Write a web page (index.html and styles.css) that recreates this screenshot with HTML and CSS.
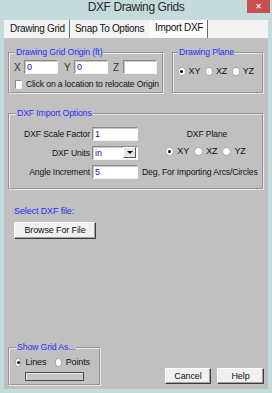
FILE: index.html
```html
<!DOCTYPE html>
<html lang="en">
<head>
  <meta charset="UTF-8" />
  <title>DXF Drawing Grids</title>
  <link rel="stylesheet" href="styles.css">
</head>
<body>
  <div class="window">
    <div class="titlebar">
      <span class="title">DXF Drawing Grids</span>
      <span class="close">&#x2715;</span>
    </div>

    <div class="tabs">
      <span class="tab tab-grid">Drawing Grid</span>
      <span class="tab tab-snap">Snap To Options</span>
      <span class="tab tab-active">Import DXF</span>
    </div>

    <div class="panel">
      <div class="top-row">
        <fieldset class="group origin">
          <legend>Drawing Grid Origin (ft)</legend>
          <div class="coords">
            <span class="coord-label">X</span><span class="field coord">0</span>
            <span class="coord-label gap-y">Y</span><span class="field coord">0</span>
            <span class="coord-label gap-z">Z</span><span class="field coord"></span>
          </div>
          <div class="check-row">
            <span class="checkbox"></span>
            <span class="check-text">Click on a location to relocate Origin</span>
          </div>
        </fieldset>

        <fieldset class="group plane">
          <legend>Drawing Plane</legend>
          <div class="radios">
            <span class="radio checked"></span><span class="radio-text">XY</span>
            <span class="radio"></span><span class="radio-text">XZ</span>
            <span class="radio"></span><span class="radio-text">YZ</span>
          </div>
        </fieldset>
      </div>

      <fieldset class="group import">
        <legend>DXF Import Options</legend>
        <div class="import-grid">
          <span class="opt-label">DXF Scale Factor</span>
          <span class="field">1</span>
          <span class="plane-title">DXF Plane</span>

          <span class="opt-label">DXF Units</span>
          <span class="field select">in<span class="drop"><span class="arrow"></span></span></span>
          <span class="radios plane-radios">
            <span class="radio checked"></span><span class="radio-text">XY</span>
            <span class="radio"></span><span class="radio-text">XZ</span>
            <span class="radio"></span><span class="radio-text">YZ</span>
          </span>

          <span class="opt-label">Angle Increment</span>
          <span class="field">5</span>
          <span class="opt-note">Deg, For Importing Arcs/Circles</span>
        </div>
      </fieldset>

      <div class="select-file">Select DXF file:</div>
      <div class="button browse">Browse For File</div>

      <div class="bottom-row">
        <fieldset class="group show-grid">
          <legend>Show Grid As...</legend>
          <div class="radios">
            <span class="radio checked"></span><span class="radio-text">Lines</span>
            <span class="radio"></span><span class="radio-text">Points</span>
          </div>
          <div class="bar"></div>
        </fieldset>

        <div class="actions">
          <div class="button cancel">Cancel</div>
          <div class="button help">Help</div>
        </div>
      </div>
    </div>
  </div>
</body>
</html>
```

FILE: styles.css
```css
body {
  margin: 0;
  width: 272px;
  height: 393px;
  overflow: hidden;
  background-color: #c5dbdb;
  font-family: "Liberation Sans", Arial, sans-serif;
  font-size: 8.6px;
  letter-spacing: -0.12px;
  color: #111;
}

.window {
  display: flex;
  flex-direction: column;
  height: 393px;
}

/* title bar */
.titlebar {
  height: 20px;
  display: grid;
  grid-template-columns: 1fr auto 1fr;
  align-items: start;
}
.title {
  grid-column: 2;
  font-size: 12px;
  letter-spacing: -0.4px;
  line-height: 15px;
  color: #2a2a2a;
}
.close {
  grid-column: 3;
  justify-self: end;
  width: 23px;
  height: 13px;
  margin-right: 2px;
  background-color: #c75050;
  color: white;
  font-family: "DejaVu Sans", sans-serif;
  font-size: 8px;
  font-weight: bold;
  line-height: 13px;
  text-align: center;
}

/* tabs */
.tabs {
  display: flex;
  height: 18px;
  margin: 0 4px;
  background-color: #f3f3f3;
  font-size: 10px;
  letter-spacing: -0.3px;
  color: #111;
}
.tab {
  box-sizing: border-box;
  line-height: 18px;
}
.tab-grid {
  width: 66px;
  padding-left: 6px;
  border-right: 1px solid #777;
}
.tab-snap {
  width: 79px;
  padding-left: 5px;
}
.tab-active {
  width: 59px;
  padding-left: 6px;
  line-height: 15px;
  background-color: #fafafa;
  border-right: 1px solid #6a6a6a;
}

/* main page */
.panel {
  flex: 1;
  display: flex;
  flex-direction: column;
  margin: 0 4px 4px;
  padding: 9px 4px 3px;
  background-color: #c0c0c0;
}

.group {
  margin: 0;
  min-width: 0;
  border: 2px groove #e8e8e8;
}
.group legend {
  padding: 0 1px;
  line-height: 11px;
  font-size: 8.7px;
  color: #2b2bff;
}

.top-row {
  display: flex;
  gap: 8px;
}
.origin {
  width: 156px;
  box-sizing: border-box;
  padding: 1px 3px 3px 4px;
}
.origin legend {
  margin-left: 1px;
}
.plane {
  width: 92px;
  box-sizing: border-box;
  padding: 8px 3px 0 4px;
}

.coords {
  display: flex;
  align-items: center;
  margin-top: 1px;
}
.coord-label {
  width: 10px;
  font-size: 10px;
  color: #333;
}
.gap-y {
  margin-left: 6px;
}
.gap-z {
  margin-left: 5px;
}

.field {
  box-sizing: border-box;
  height: 14px;
  padding-left: 2px;
  line-height: 12px;
  font-size: 9px;
  background-color: white;
  border: 1px solid;
  border-color: #8a8a8a #f4f4f4 #f4f4f4 #8a8a8a;
  box-shadow: inset 1px 1px 0 #c9c9c9;
  color: #15158c;
}
.coord {
  width: 34px;
}

.check-row {
  display: flex;
  align-items: center;
  margin-top: 5px;
  height: 10px;
}
.checkbox {
  box-sizing: border-box;
  width: 9px;
  height: 9px;
  margin-left: 1px;
  background-color: white;
  border: 1px solid;
  border-color: #8a8a8a #eee #eee #8a8a8a;
}
.check-text {
  margin-left: 4px;
  white-space: nowrap;
}

.radios {
  display: flex;
  align-items: center;
}
.radio {
  box-sizing: border-box;
  width: 9px;
  height: 9px;
  border-radius: 50%;
  background-color: white;
  border: 1px solid #a9a9a9;
  display: flex;
  align-items: center;
  justify-content: center;
}
.radio.checked::after {
  content: "";
  width: 3px;
  height: 3px;
  border-radius: 50%;
  background-color: black;
}
.radio-text {
  margin: 0 5px 0 3px;
  font-size: 9px;
}

/* DXF import options */
.import {
  margin-top: 14px;
  padding: 8px 0 9px 4px;
}
.import legend {
  margin-left: 2px;
}
.import-grid {
  display: grid;
  grid-template-columns: 78px 46px 1fr;
  grid-auto-rows: 14px;
  row-gap: 5px;
  align-items: center;
  white-space: nowrap;
}
.opt-label {
  text-align: right;
  padding-right: 2px;
}
.plane-title {
  text-align: center;
  padding-left: 14px;
}
.plane-radios {
  justify-content: center;
  padding-left: 16px;
  align-self: start;
}
.opt-note {
  padding-left: 4px;
}

.select {
  display: flex;
  justify-content: space-between;
  padding-right: 1px;
}
.drop {
  width: 13px;
  height: 11px;
  box-sizing: border-box;
  background-color: #e6e6e6;
  border: 1px solid;
  border-color: #fff #555 #555 #fff;
  display: flex;
  align-items: center;
  justify-content: center;
}
.arrow {
  width: 0;
  height: 0;
  border-left: 3px solid transparent;
  border-right: 3px solid transparent;
  border-top: 3px solid black;
}

.select-file {
  margin: 16px 0 0 6px;
  line-height: 11px;
  font-size: 9px;
  color: #2b2bff;
}

.button {
  box-sizing: border-box;
  height: 17px;
  line-height: 15px;
  font-size: 9px;
  text-align: center;
  background-color: #f0f0f0;
  border: 1px solid;
  border-color: #fff #3c3c3c #3c3c3c #fff;
  box-shadow: inset -1px -1px 0 #a0a0a0;
  color: #111;
}
.browse {
  width: 82px;
  margin: 5px 0 0 6px;
}

/* bottom row */
.bottom-row {
  margin-top: auto;
  display: flex;
  justify-content: space-between;
  align-items: flex-end;
}
.show-grid {
  width: 93px;
  box-sizing: border-box;
  padding: 4px 0 3px 5px;
}
.show-grid legend {
  margin-left: 1px;
}
.show-grid .radio-text {
  margin: 0 9px 0 4px;
}
.bar {
  width: 59px;
  height: 9px;
  box-sizing: border-box;
  margin: 5px 0 0 10px;
  background-color: #c6c6c6;
  border: 1px solid #4a4a4a;
  box-shadow: inset 1px 1px 0 #eaeaea;
}

.actions {
  display: flex;
  gap: 6px;
  margin-bottom: 2px;
}
.cancel {
  width: 46px;
  height: 16px;
}
.help {
  width: 47px;
  height: 16px;
}
```
